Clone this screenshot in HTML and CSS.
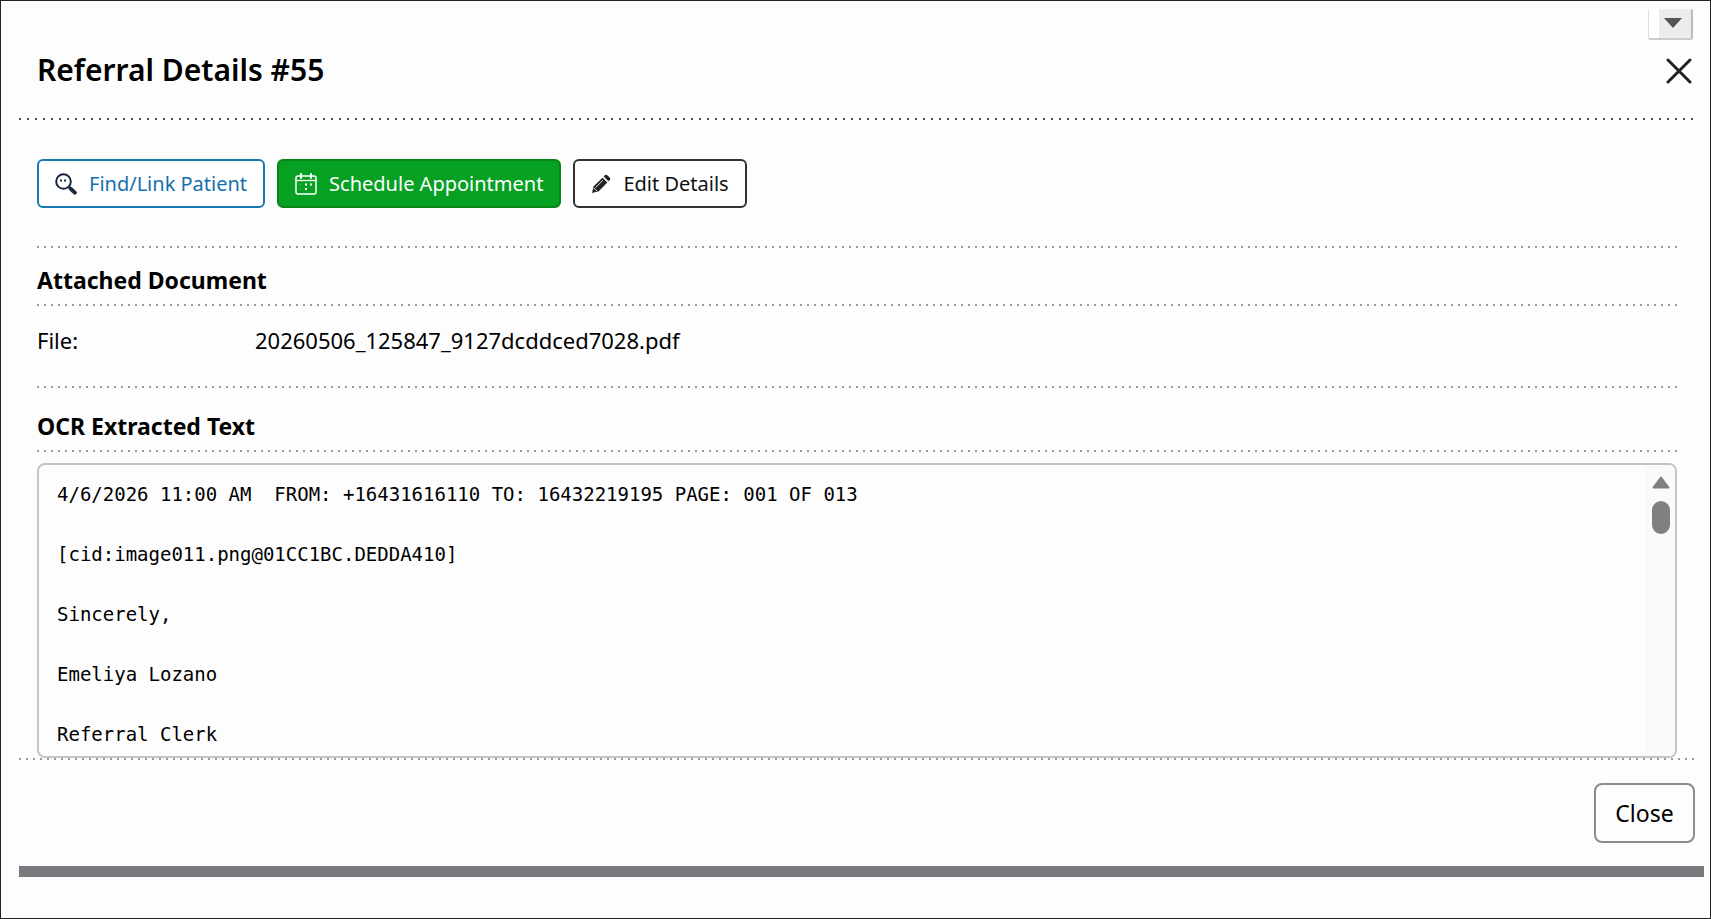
FILE: index.html
```html
<!DOCTYPE html>
<html lang="en">
<head>
    <meta charset="UTF-8">
    <meta name="viewport" content="width=device-width, initial-scale=1.0">
    <title>Referral Details #55</title>
    <link rel="stylesheet" href="styles.css">
</head>
<body>
    <div class="window">
        <div class="topbar">
            <button class="menu-toggle" aria-label="Open menu">
                <svg width="18" height="10" viewBox="0 0 18 10"><path d="M0 0h18L9 10z" fill="#555"/></svg>
            </button>
        </div>

        <header class="header">
            <h1>Referral Details #55</h1>
            <button class="close-x" aria-label="Close dialog">
                <svg width="26" height="26" viewBox="0 0 26 26" fill="none" stroke="#222" stroke-width="3" stroke-linecap="round"><path d="M2 2l22 22M24 2L2 24"/></svg>
            </button>
        </header>
        <div class="dots dots-dark"></div>

        <main class="content">
            <div class="actions">
                <button class="btn btn-blue">
                    <svg width="22" height="22" viewBox="0 0 22 22" fill="none" stroke="#17293f">
                        <circle cx="8.5" cy="8.5" r="7.3" stroke-width="2"/>
                        <path d="M13.6 13.6l2 2" stroke-width="2"/>
                        <path d="M15.6 15.6l4.2 4" stroke-width="4" stroke-linecap="round"/>
                        <path d="M5 7.5h2M9 7.5h2" stroke-width="2"/>
                    </svg>
                    Find/Link Patient
                </button>
                <button class="btn btn-green">
                    <svg width="22" height="22" viewBox="0 0 22 22" fill="none" stroke="#fff">
                        <rect x="1" y="3" width="20" height="18" rx="2" stroke-width="1.5"/>
                        <path d="M1 7.5h20" stroke-width="1.3"/>
                        <path d="M6 1v4M16 1v4" stroke-width="2" stroke-linecap="round"/>
                        <path d="M10 11.5h2M15 11.5h2M10 16h2" stroke-width="2"/>
                        <path d="M5 11.5h1M5 16h1" stroke-width="1" opacity=".4"/>
                    </svg>
                    Schedule Appointment
                </button>
                <button class="btn btn-dark">
                    <svg width="20" height="20" viewBox="0 0 22 22">
                        <path d="M1 21l2-7.5L12.7 4l5.3 5.3L8.5 19z" fill="#222"/>
                        <path d="M14 2.7l1.500-1.500q1.200-.9 2.400.2l2.800 2.800q1 1.200.1 2.300L19.300 8z" fill="#222"/>
                        <path d="M5 15l8-8M3.200 15.500l3.300 3.300" stroke="#fff" stroke-width="1" fill="none"/>
                    </svg>
                    Edit Details
                </button>
            </div>

            <section class="document">
                <div class="dots"></div>
                <h2>Attached Document</h2>
                <div class="dots"></div>
                <dl class="file">
                    <dt>File:</dt>
                    <dd>20260506_125847_9127dcddced7028.pdf</dd>
                </dl>
            </section>

            <section class="ocr">
                <div class="dots"></div>
                <h2>OCR Extracted Text</h2>
                <div class="dots"></div>
                <div class="ocr-box">
<pre>4/6/2026 11:00 AM  FROM: +16431616110 TO: 16432219195 PAGE: 001 OF 013

[cid:image011.png@01CC1BC.DEDDA410]

Sincerely,

Emeliya Lozano

Referral Clerk</pre>
                    <div class="scrollbar">
                        <svg width="18" height="13" viewBox="0 0 18 13"><path d="M9 1.500L16.500 11.500H1.500z" fill="#808080" stroke="#808080" stroke-width="2" stroke-linejoin="round"/></svg>
                        <div class="thumb"></div>
                    </div>
                </div>
            </section>
        </main>

        <div class="dots"></div>
        <footer class="footer">
            <button class="btn-close">Close</button>
        </footer>
        <div class="bottom-bar"></div>
    </div>
</body>
</html>
```

FILE: styles.css
```css
* {
    box-sizing: border-box;
}

body {
    margin: 0;
    background: #fdfdfd;
    color: #000;
    font-family: "Noto Sans", "Open Sans", sans-serif;
}

h1, h2, dl, dd, pre {
    margin: 0;
}

button {
    font-family: inherit;
    cursor: pointer;
}

.window {
    min-height: 100vh;
    padding: 8px 6px 0 18px;
    border: 1px solid #222;
}

.topbar {
    display: flex;
    justify-content: flex-end;
    padding-right: 11px;
}

.menu-toggle {
    display: flex;
    align-items: center;
    justify-content: center;
    width: 45px;
    height: 31px;
    padding: 0 0 1px 6px;
    border: 1px solid #ddd;
    border-width: 0 2px 2px 1px;
    border-color: #ddd #bbb #ccc #ddd;
    border-radius: 2px;
    background: linear-gradient(to right, #fff 10px, #ececec 10px);
}

.header {
    display: flex;
    align-items: center;
    justify-content: space-between;
    padding: 11px 12px 27px 18px;
}

h1 {
    padding-bottom: 2px;
    font-size: 30px;
    font-weight: 600;
    line-height: 38px;
}

.close-x {
    display: flex;
    padding: 0;
    border: 0;
    background: none;
}

/* separator made of small square dots */
.dots {
    height: 2px;
    margin-right: 10px;
    background: repeating-linear-gradient(to right, #999 0 2px, transparent 2px 7px);
}

.dots-dark {
    background: repeating-linear-gradient(to right, #555 0 2px, transparent 2px 8px);
}

.content {
    padding: 39px 27px 0 18px;
}

.content .dots {
    margin-right: 0;
}

.actions {
    display: flex;
    gap: 12px;
    margin-bottom: 38px;
}

.btn {
    display: flex;
    align-items: center;
    gap: 12px;
    height: 49px;
    padding: 0 16px;
    border: 2px solid;
    border-radius: 6px;
    background: #fff;
    font-size: 20px;
}

.btn-blue {
    border-color: #1a78b4;
    color: #1470ad;
}

.btn-green {
    border-color: #078517;
    background: #06a123;
    color: #fff;
}

.btn-dark {
    border-color: #333;
    color: #111;
}

h2 {
    font-size: 23px;
    font-weight: 700;
    line-height: 32px;
}

.document h2 {
    padding: 16px 0 8px;
}

.file {
    display: flex;
    padding: 18px 0 30px;
    font-size: 22px;
    line-height: 32px;
}

.file dt {
    width: 218px;
}

.ocr h2 {
    padding: 22px 0 8px;
}

.ocr-box {
    display: flex;
    justify-content: space-between;
    margin-top: 11px;
    border: 2px solid #c4c4c6;
    border-radius: 8px;
}

.ocr-box pre {
    padding: 14px 18px 7px;
    font-family: "DejaVu Sans Mono", monospace;
    font-size: 19px;
    line-height: 30px;
}

.scrollbar {
    display: flex;
    flex-direction: column;
    align-items: center;
    gap: 12px;
    width: 29px;
    padding-top: 11px;
    border-radius: 0 6px 6px 0;
    background: #fafafa;
}

.thumb {
    width: 18px;
    height: 33px;
    border-radius: 9px;
    background: #808080;
}

.footer {
    display: flex;
    justify-content: flex-end;
    padding: 23px 9px 23px 0;
}

.btn-close {
    width: 101px;
    height: 60px;
    padding-bottom: 2px;
    border: 2px solid #8a8c92;
    border-radius: 8px;
    background: #fdfdfd;
    font-size: 23px;
}

.bottom-bar {
    height: 11px;
    background: #787a7e;
}
```
